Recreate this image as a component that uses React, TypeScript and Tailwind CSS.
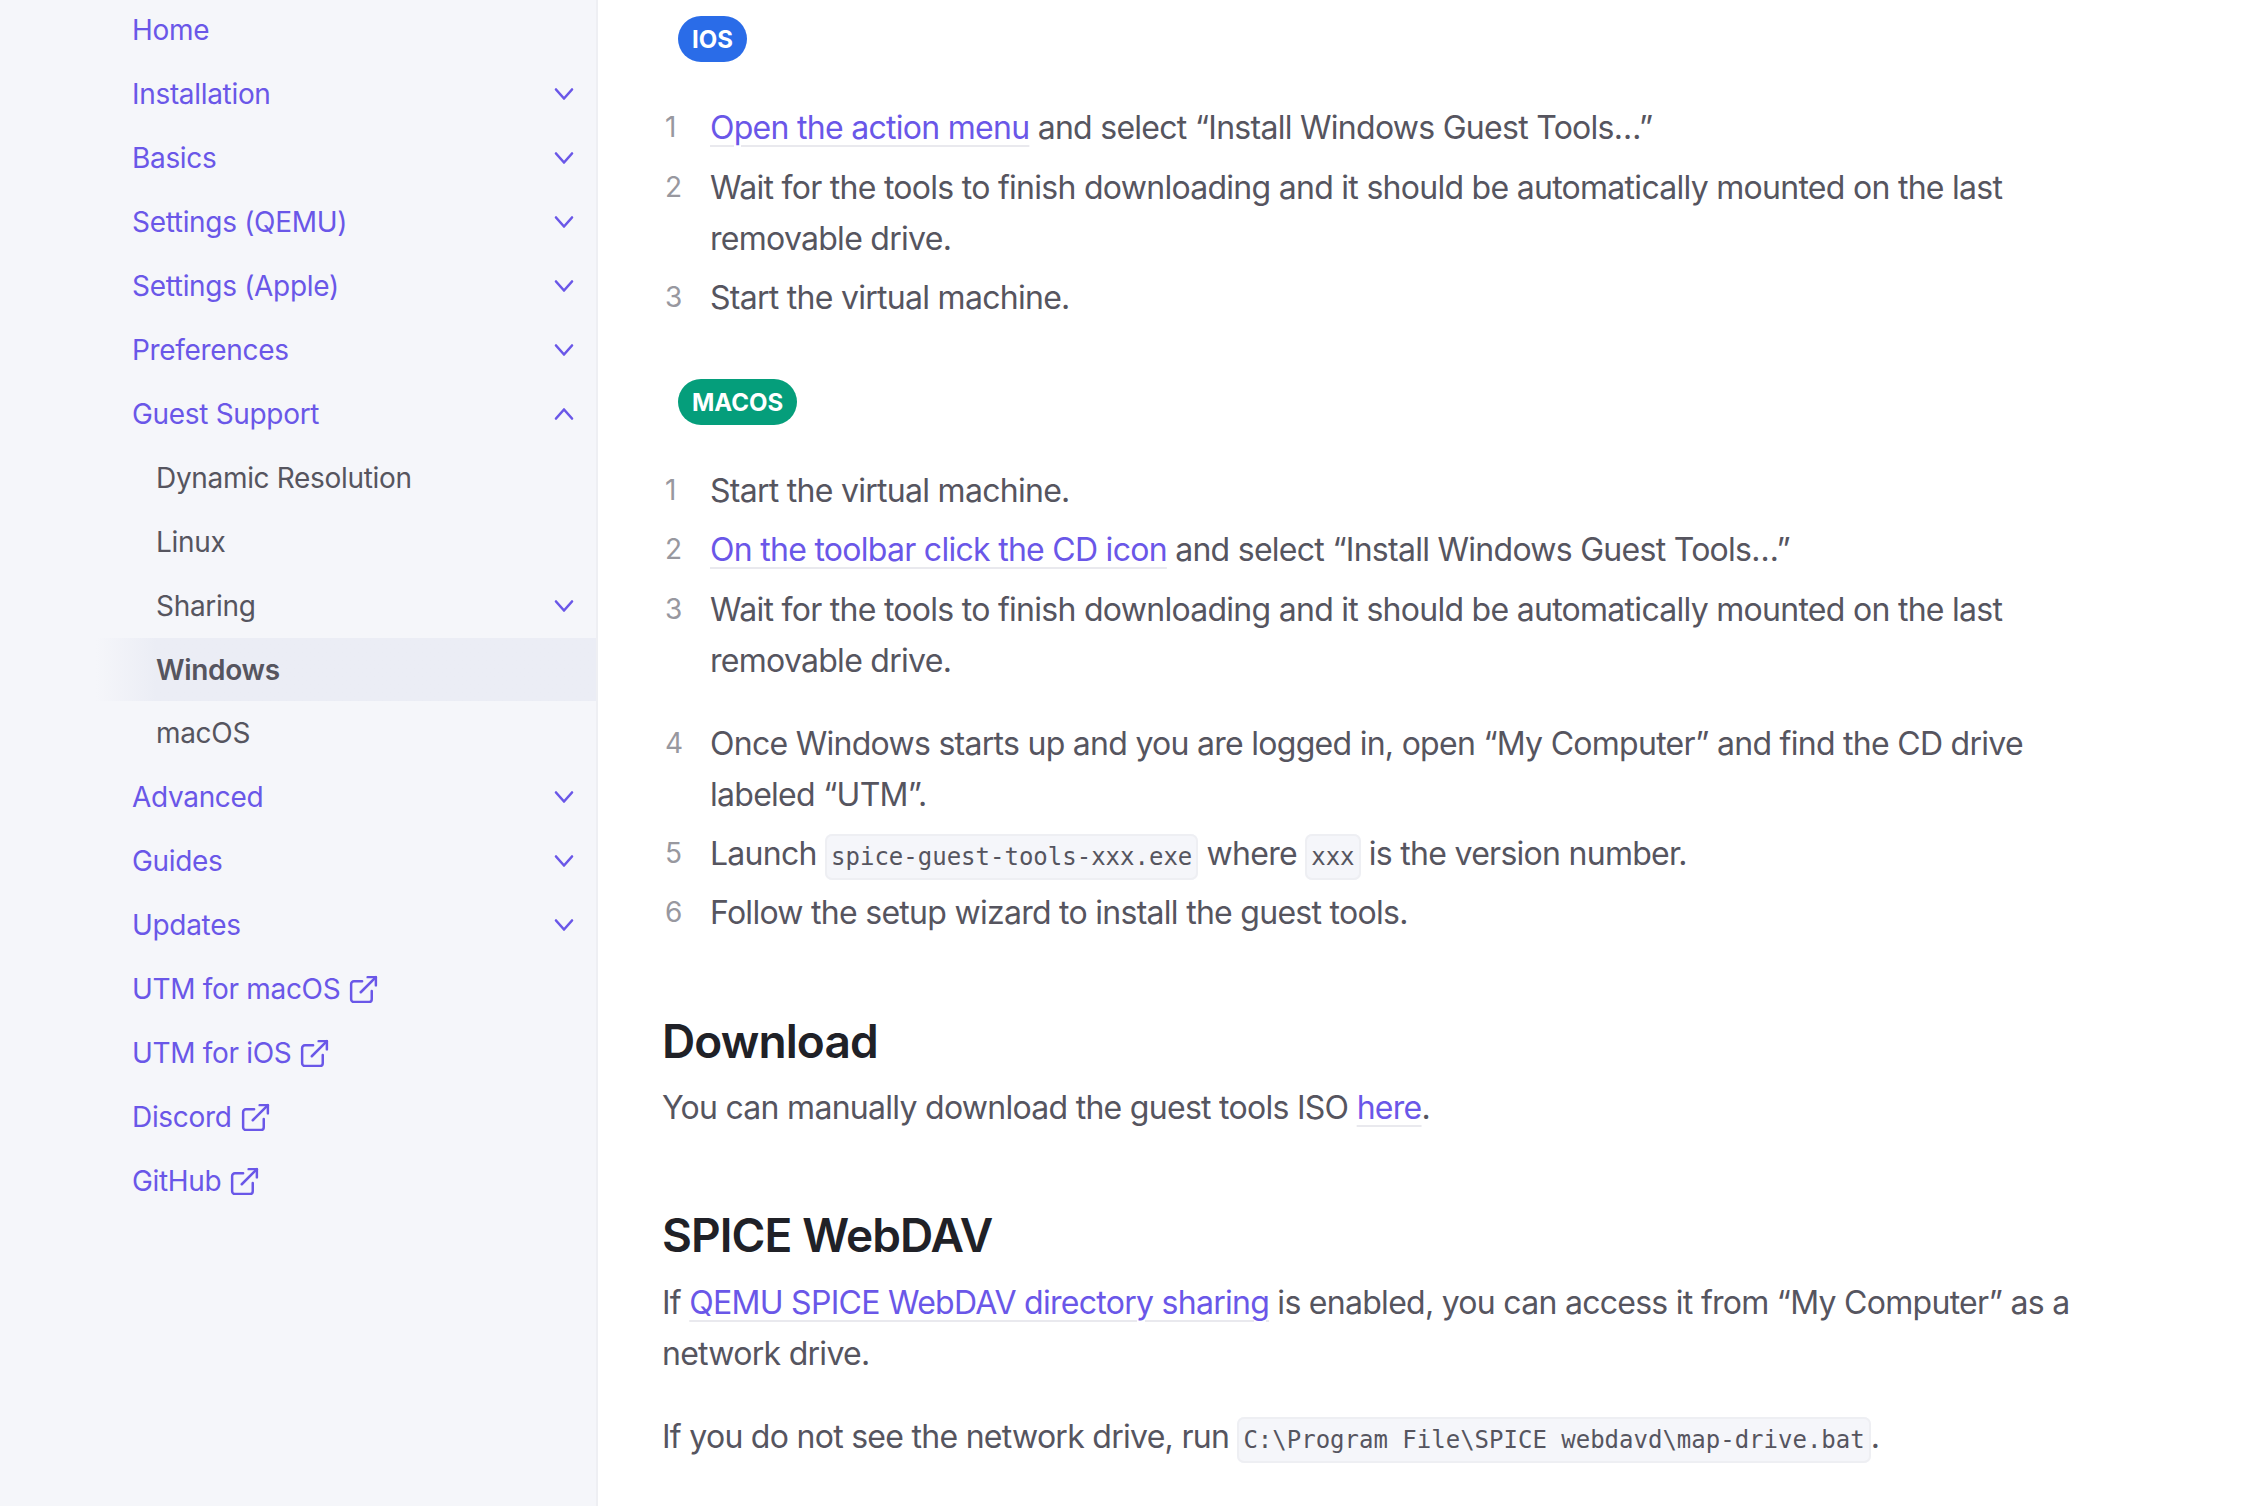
import React from 'react';
import { ExternalLink } from 'lucide-react';

type NavItem = {
    label: string;
    chevron?: 'down' | 'up';
    external?: boolean;
    sub?: boolean;
    active?: boolean;
};

const navItems: NavItem[] = [
    { label: 'Home' },
    { label: 'Installation', chevron: 'down' },
    { label: 'Basics', chevron: 'down' },
    { label: 'Settings (QEMU)', chevron: 'down' },
    { label: 'Settings (Apple)', chevron: 'down' },
    { label: 'Preferences', chevron: 'down' },
    { label: 'Guest Support', chevron: 'up' },
    { label: 'Dynamic Resolution', sub: true },
    { label: 'Linux', sub: true },
    { label: 'Sharing', sub: true, chevron: 'down' },
    { label: 'Windows', sub: true, active: true },
    { label: 'macOS', sub: true },
    { label: 'Advanced', chevron: 'down' },
    { label: 'Guides', chevron: 'down' },
    { label: 'Updates', chevron: 'down' },
    { label: 'UTM for macOS', external: true },
    { label: 'UTM for iOS', external: true },
    { label: 'Discord', external: true },
    { label: 'GitHub', external: true },
];

const Chevron: React.FC<{ up?: boolean }> = ({ up }) => (
    <svg viewBox="0 0 20 14" className="ml-auto h-[14px] w-[20px] text-[#6a57e8]" fill="none" stroke="currentColor" strokeWidth={2.6} strokeLinecap="round" strokeLinejoin="round">
        <polyline points={up ? '2,11.5 10,2.5 18,11.5' : '2,2.5 10,11.5 18,2.5'} />
    </svg>
);

const SideRow: React.FC<{ item: NavItem }> = ({ item }) => {
    const color = item.sub ? 'text-[#56555f]' : 'text-[#6a57e8]';
    // the current page fades in from the left instead of starting on a hard edge
    const rowClass = item.active
        ? '-ml-[36px] pl-[60px] bg-linear-to-r from-[#f5f6fa] to-[#ebedf5] to-[60px] font-semibold'
        : item.sub
            ? 'pl-[24px]'
            : '';
    return (
        <div className={`flex h-[63.96px] items-center pr-[22px] ${rowClass} ${color}`}>
            <span>{item.label}</span>
            {item.external && <ExternalLink className="ml-[7px] h-[33px] w-[33px]" strokeWidth={1.8} />}
            {item.chevron === 'down' && <Chevron />}
            {item.chevron === 'up' && <Chevron up />}
        </div>
    );
};

const Link: React.FC<{ children: React.ReactNode }> = ({ children }) => (
    <a className="text-[#6a57e8] underline decoration-[#e9e9ee] decoration-2 underline-offset-[6px]">{children}</a>
);

const Code: React.FC<{ children: React.ReactNode }> = ({ children }) => (
    <code className="rounded-[7px] border-2 border-[#eeeff3] bg-[#f5f6fa] px-[4px] py-[7px] font-['DejaVu_Sans_Mono',monospace] text-[24px] leading-none tracking-normal text-[#56555f]">
        {children}
    </code>
);

const Step: React.FC<{ n: number; className?: string; children: React.ReactNode }> = ({ n, className, children }) => (
    <li className={`flex ${className ?? ''}`}>
        <span className="w-[48px] shrink-0 pl-[3px] text-[28px] text-[#98989f]">{n}</span>
        <div>{children}</div>
    </li>
);

const App: React.FC = () => {
    return (
        <div className="flex h-[1506px] overflow-hidden bg-white font-['Inter',sans-serif]">
            <aside className="w-[598px] shrink-0 border-r-2 border-[#eeeff3] bg-[#f5f6fa] pl-[132px] text-[28px] tracking-[-0.32px]">
                <nav className="-mt-[2px]">
                    {navItems.map(item => <SideRow key={item.label} item={item} />)}
                </nav>
            </aside>
            <main className="w-[1492px] pl-[64px] text-[32px] leading-[51px] tracking-[-0.72px] text-[#56555f]">
                <span className="mt-[16px] ml-[16px] inline-flex h-[46px] items-center rounded-full bg-[#2a6ce8] px-[14px] text-[24px] font-bold tracking-normal text-white">IOS</span>
                <ol className="mt-[40px]">
                    <Step n={1}><Link>Open the action menu</Link> and select “Install Windows Guest Tools…”</Step>
                    <Step n={2} className="mt-[9px]">Wait for the tools to finish downloading and it should be automatically mounted on the last removable drive.</Step>
                    <Step n={3} className="mt-[8px]">Start the virtual machine.</Step>
                </ol>
                <span className="mt-[56px] ml-[16px] inline-flex h-[46px] items-center rounded-full bg-[#059e7b] px-[14px] text-[24px] font-bold tracking-normal text-white">MACOS</span>
                <ol className="mt-[40px]">
                    <Step n={1}>Start the virtual machine.</Step>
                    <Step n={2} className="mt-[8px]"><Link>On the toolbar click the CD icon</Link> and select “Install Windows Guest Tools…”</Step>
                    <Step n={3} className="mt-[9px]">Wait for the tools to finish downloading and it should be automatically mounted on the last removable drive.</Step>
                    <Step n={4} className="mt-[32px]">Once Windows starts up and you are logged in, open “My Computer” and find the CD drive labeled “UTM”.</Step>
                    <Step n={5} className="mt-[8px]">Launch <Code>spice-guest-tools-xxx.exe</Code> where <Code>xxx</Code> is the version number.</Step>
                    <Step n={6} className="mt-[8px]">Follow the setup wizard to install the guest tools.</Step>
                </ol>
                <h2 className="mt-[73px] text-[46px] leading-[60px] font-semibold tracking-[-0.9px] text-[#202127]">Download</h2>
                <p className="mt-[11px]">You can manually download the guest tools ISO <Link>here</Link>.</p>
                <h2 className="mt-[72px] text-[46px] leading-[60px] font-semibold tracking-[-0.9px] text-[#202127]">SPICE WebDAV</h2>
                <p className="mt-[12px]">If <Link>QEMU SPICE WebDAV directory sharing</Link> is enabled, you can access it from “My Computer” as a network drive.</p>
                <p className="mt-[32px]">If you do not see the network drive, run <Code>{'C:\\Program File\\SPICE webdavd\\map-drive.bat'}</Code>.</p>
            </main>
        </div>
    );
};

export default App;
